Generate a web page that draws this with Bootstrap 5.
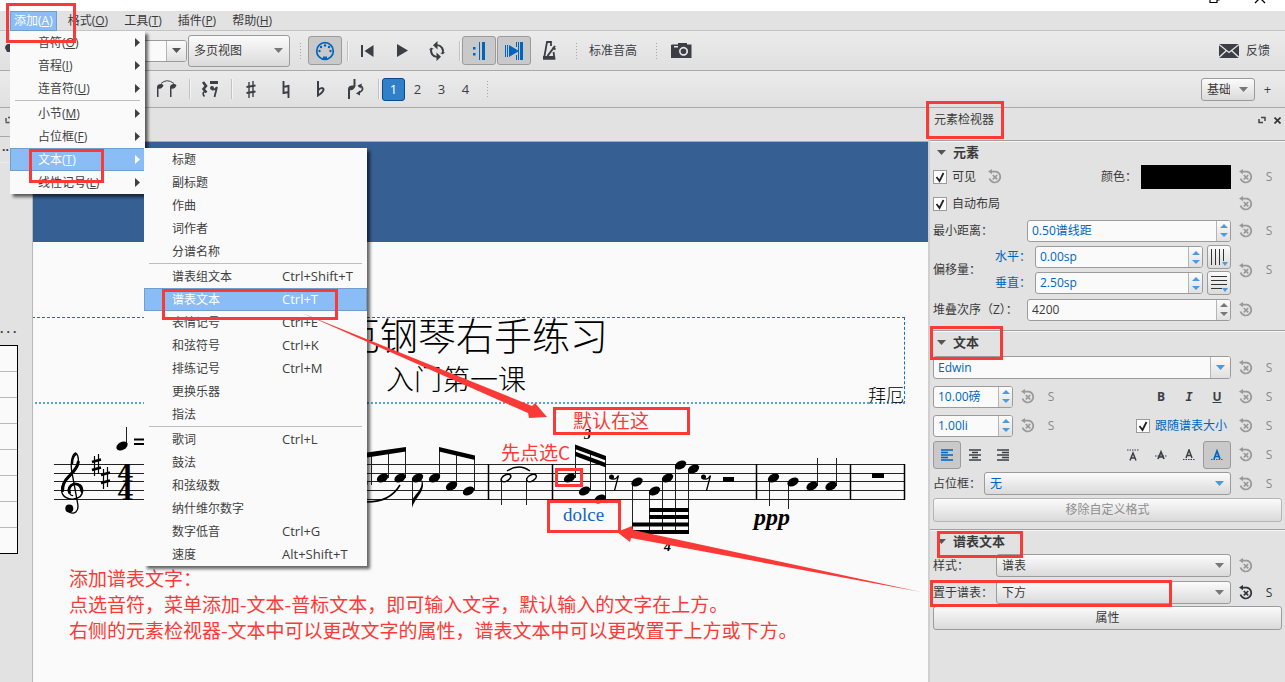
<!DOCTYPE html>
<html lang="zh-CN">
<head>
<meta charset="utf-8">
<meta name="viewport" content="width=device-width, initial-scale=1">
<title>MuseScore</title>
<link href="https://cdn.jsdelivr.net/npm/bootstrap@5.3.0/dist/css/bootstrap.min.css" rel="stylesheet">
<style>
:root{--ink:#3b3f45;--blue:#0065bf;--edge:#9b9b9b;--chrome:#e2e2e2;--paper:#fafafa;--mark:#fb3a37}
body{font:12px/18px "Open Sans","Noto Sans CJK SC",sans-serif;color:#3a3a3a;background:var(--chrome);min-height:100vh;overflow:hidden}
button,input,select{font:inherit;color:inherit}
svg{display:block;flex:none}
.titlebar{height:11px;background:#fff}
.menubar{height:20px;border-bottom:1px solid #c4c4c4;padding-left:10px}
.menubar button{border:0;background:none;padding:0 4px;height:20px;line-height:18px;margin-right:8px}
.menubar .opened{background:#8abcf5;border:1px solid #6f9fcd;color:#fff;padding:0 3px;margin-right:7px}
.toolrow{background:linear-gradient(#ebebeb,#e0e0e0);border-bottom:1px solid #a9a9a9;gap:1px}
.tr-a{height:40px;padding-left:4px}
.tr-b{height:37px;padding:0 2px 0 150px}
.tool{width:34px;height:29px;border:1px solid transparent;background:none;border-radius:3px;padding:0;display:flex;align-items:center;justify-content:center;color:var(--ink);flex:none}
.tool.active{background:#c9c9c9;border-color:var(--edge);color:var(--blue)}
.tool.feedback{width:auto;padding-right:14px;gap:7px}
.voice{width:23px;height:23px;font-size:13px}
.voice.active{background:#2f80c8;border-color:#0c4a86;color:#fff}
.tsep{width:2px;height:20px;border-left:1px solid #c2c2c2;border-right:1px solid #f4f4f4;flex:none}
.grip{width:4px;height:18px;flex:none;background:radial-gradient(circle,#a8a8a8 30%,transparent 45%) 0 0/3px 3px}
.combo{appearance:none;height:23px;border:1px solid var(--edge);border-radius:3px;padding:0 24px 0 5px;line-height:19px;min-width:0;
 background:url("data:image/svg+xml,%3Csvg xmlns='http://www.w3.org/2000/svg' width='9' height='5'%3E%3Cpath d='M0 0h9L4.500 5z' fill='%23777'/%3E%3C/svg%3E") no-repeat right 6px center,linear-gradient(#fbfbfb,#dadada)}
.combo.blue{color:var(--blue);background-image:url("data:image/svg+xml,%3Csvg xmlns='http://www.w3.org/2000/svg' width='9' height='5'%3E%3Cpath d='M0 0h9L4.500 5z' fill='%234a9be0'/%3E%3C/svg%3E"),linear-gradient(#fbfbfb,#dadada)}
.combo.tall{height:32px;width:102px}
.zoombox{width:84px;height:32px;border-radius:3px}
.pushbtn{height:24px;border:1px solid var(--edge);border-radius:3px;background:linear-gradient(#fbfbfb,#dadada);padding:0;line-height:20px}
.pushbtn:disabled{color:#8e8e8e;border-color:#b5b5b5}
.spin{height:22px;border:1px solid var(--edge);border-radius:3px;background:var(--paper);overflow:hidden;color:var(--blue);min-width:0}
.spin.plain{color:#3a3a3a}
.spin input{border:0;background:none;min-width:0;width:10px;padding:0 4px;outline:0}
.spin button{border:0;border-left:1px solid #b5b5b5;background:linear-gradient(#fbfbfb,#e0e0e0);padding:0;width:14px;display:flex;align-items:center;justify-content:center;color:#4a9be0;flex:none}
.spin.plain button{color:#777}
.w-num{width:80px}
.dock{width:33px;border-right:1px solid #b9b9b9;overflow:hidden}
.dockhead{height:34px;border-bottom:1px solid #a9a9a9}
.palette{width:18px;height:209px;border:1px solid #000;border-left:0;background:repeating-linear-gradient(var(--paper) 0 25px,#b9b9b9 25px 26px)}
.backdrop-blue{height:100px;background:#365f94}
.page{background:var(--paper);padding-top:75px}
.frame{margin:0 23px 0 -26px;height:87px;border:1px dashed #1670c4;border-bottom:2px dotted #5aa0dc;color:#000}
.songtitle{font-size:38px;line-height:34px;font-weight:300}
.songsub{font-size:28px;line-height:34px;margin-top:10px;font-weight:300}
.composer{right:0;bottom:-2px;font-size:18px;line-height:18px;font-weight:300}
.notes-red{color:var(--mark);font-size:19px;line-height:26px;padding-left:36px;font-family:"Noto Sans CJK SC",sans-serif}
.inspector{width:357px;border-left:2px solid #cfcfcf}
.panel{padding:0 3px 7px 3px}
.sect{border-top:1px solid #a0a0a0;box-shadow:inset 0 1px #f6f6f6}
.secthead{height:22px;border:0;background:none;padding:0 0 0 4px;font-weight:700;gap:7px;font-size:13px}
.r27{height:27px}.r26{height:26px}.r29{height:29px}
.resetbtn{width:30px;border:0;background:none;padding:0;display:flex;justify-content:center;color:#999;flex:none}
.sbtn{width:16px;margin-right:5px;border:0;background:none;padding:0;color:#8a8a8a;flex:none}
.strong{color:#2f3338}
.tick{appearance:none;width:14px;height:14px;margin:0 5px 0 0;border:1px solid var(--edge);background:#fff url("data:image/svg+xml,%3Csvg xmlns='http://www.w3.org/2000/svg' width='12' height='12'%3E%3Cpath d='M2.500 6l3 4L9.500 2' fill='none' stroke='%23222' stroke-width='1.800'/%3E%3C/svg%3E") center no-repeat}
.fmt{width:28px;height:28px}
.swatch{width:90px;height:24px;background:#000;border:0}
.bluetext{color:var(--blue)}
.flyout{position:absolute;background:var(--paper);box-shadow:3px 3px 3px rgba(0,0,0,.6);z-index:5}
.fly-a{left:10px;top:31px;width:135px}
.fly-b{left:144px;top:148px;width:223px}
.entry{height:23px;width:100%;border:1px solid transparent;background:none;padding:0 4px 0 27px;display:flex;align-items:center;text-align:left;line-height:19px;color:#404040}
.entry kbd{all:unset;width:80px;font-size:13px;white-space:nowrap}
.entry.chosen{background:#8abcf5;border-color:#6f9fcd;color:#fff}
.divide{height:2px;margin:0 5px;border-top:1px solid #bdbdbd}
.overlay{position:absolute;left:0;top:0;z-index:9;pointer-events:none;overflow:visible}
.ring rect{fill:none;stroke:var(--mark);stroke-width:3}
</style>
</head>
<body class="position-relative d-flex flex-column">

<svg width="0" height="0" class="position-absolute" aria-hidden="true">
 <symbol id="i-reset" viewBox="0 0 14 15"><path d="M3 2.600H8a5.500 5.500 0 1 1-6.500 7" fill="none" stroke="currentColor" stroke-width="1.700"/><path d="M0 2.600L4 0v5.200z" fill="currentColor"/><path d="M4.800 6l4.400 4.400M9.200 6l-4.400 4.400" stroke="currentColor" stroke-width="1.700"/></symbol>
 <symbol id="i-spin" viewBox="0 0 8 15"><path d="M0 5L4 1l4 4zM0 10l4 4 4-4z" fill="currentColor"/></symbol>
 <symbol id="i-right" viewBox="0 0 5 9"><path d="M0 0l5 4.500L0 9z" fill="currentColor"/></symbol>
 <symbol id="i-down" viewBox="0 0 9 5"><path d="M0 0h9L4.500 5z" fill="#555"/></symbol>
 <symbol id="head" viewBox="-7 -6 14 12" overflow="visible"><ellipse rx="6" ry="4" transform="rotate(-27)"/></symbol>
 <symbol id="rest8" viewBox="0 0 11 18" overflow="visible"><circle cx="2.500" cy="3" r="2.500"/><path d="M2 4.500C6 6.500 8 4 9.500 1.500L5.500 16.500" fill="none" stroke="#000" stroke-width="1.300"/></symbol>
 <symbol id="sharp" viewBox="0 0 9 22" overflow="visible"><path d="M2.500 2v20M6.500 0v20" stroke="#000" stroke-width="1.200"/><path d="M0 8l9-2.500M0 16l9-2.500" stroke="#000" stroke-width="2.800"/></symbol>
</svg>

<div class="titlebar d-flex justify-content-end">
 <svg width="85" height="11"><path d="M10 -4V2.500H17V-4M12.500 -2H19V0H17" fill="none" stroke="#000" stroke-width="1.200"/><path d="M55 3L60 -2L65 3" fill="none" stroke="#000" stroke-width="1.300"/></svg>
</div>

<nav class="menubar d-flex align-items-start">
 <button class="opened">添加(<u>A</u>)</button><button>格式(<u>O</u>)</button><button>工具(<u>T</u>)</button><button>插件(<u>P</u>)</button><button>帮助(<u>H</u>)</button>
</nav>

<div class="toolrow tr-a d-flex align-items-center">
 <svg width="20" height="14"><path d="M1 4a5 4 0 0 1 12 0v6H6V8H3z" fill="#3b3f45"/></svg>
 <div style="width:77px"></div>
 <div class="spin plain zoombox d-flex"><input class="flex-fill" aria-label="缩放"><button style="width:20px" aria-label="选择缩放"><svg width="9" height="5"><use href="#i-down"/></svg></button></div>
 <select class="combo tall" aria-label="视图"><option>多页视图</option></select>
 <div class="grip ms-2 me-1"></div>
 <button class="tool active" aria-label="MIDI"><svg width="20" height="20" viewBox="0 0 20 20"><circle cx="10" cy="10" r="8.300" fill="none" stroke="currentColor" stroke-width="1.700"/><g fill="currentColor"><circle cx="4.500" cy="10" r="1.200"/><circle cx="6" cy="6" r="1.200"/><circle cx="10" cy="4.500" r="1.200"/><circle cx="14" cy="6" r="1.200"/><circle cx="15.500" cy="10" r="1.200"/><path d="M8 19v-3.500h4V19z"/></g></svg></button>
 <div class="tsep ms-1"></div>
 <button class="tool" aria-label="回到开头"><svg width="13" height="12"><path d="M0 0h2v12H0zM12.500 0v12L3.500 6z" fill="currentColor"/></svg></button>
 <button class="tool" aria-label="播放"><svg width="11" height="13"><path d="M0 0l11 6.500L0 13z" fill="currentColor"/></svg></button>
 <button class="tool" aria-label="循环"><svg width="18" height="20" viewBox="0 0 18 20"><path d="M8 4.200A6 6 0 0 1 14.200 13M10 15.800A6 6 0 0 1 3.800 7" fill="none" stroke="currentColor" stroke-width="1.900"/><path d="M9.500 0v8.400L5 4.200zM8.500 11.600V20l4.500-4.200zM11.500 12.500h4.500l1-1.500M6.500 7.500H2L1 9" fill="currentColor"/></svg></button>
 <div class="tsep ms-1"></div>
 <button class="tool active" aria-label="播放反复"><svg width="13" height="18"><path d="M6 0h1v18H6zM9 0h3v18H9z" fill="currentColor"/><path d="M0 5h2.500v2.500H0zM0 11h2.500v2.500H0z" fill="currentColor"/></svg></button>
 <button class="tool active" aria-label="跟随播放"><svg width="18" height="18"><path d="M0 3h1v12H0zM2 3h1v12H2zM4 3l10 6-10 6zM11 0h1v5h-1zM13 0h1v18h-1zM15 0h3v18h-3zM11 13h1v5h-1z" fill="currentColor"/></svg></button>
 <button class="tool" aria-label="节拍器"><svg width="15" height="19" viewBox="0 0 15 19"><path d="M9 5V1H5L2 17.500h10.500L11.500 11" fill="none" stroke="currentColor" stroke-width="1.800"/><path d="M1 15h12v3.500H1z" fill="currentColor"/><path d="M5.500 15L13 5M10.500 6.500l3 2" stroke="currentColor" stroke-width="2"/></svg></button>
 <div class="grip ms-2"></div>
 <button class="tool w-auto ms-1 ps-1">标准音高</button>
 <div class="grip ms-3"></div>
 <button class="tool ms-1" aria-label="截图"><svg width="21" height="15" viewBox="0 0 21 15"><path fill-rule="evenodd" d="M1 1.500H7V0h9v1.500h4.500V15H0V2zM12.500 3.800a4.500 4.500 0 1 0 .1 0zM3 3v1.500h4V3z" fill="currentColor"/><circle cx="12.500" cy="8.300" r="2.800" fill="currentColor"/></svg></button>
 <button class="tool feedback ms-auto"><svg width="20" height="14" viewBox="0 0 20 14"><path d="M0 0h20v14H0z" fill="#3b3f45"/><path d="M0 .500L10 8.500 20 .500M0 13.500l7.500-7M20 13.500l-7.500-7" fill="none" stroke="#e6e6e6" stroke-width="1.300"/></svg>反馈</button>
</div>

<div class="toolrow tr-b d-flex align-items-center">
 <button class="tool" aria-label="连音线"><svg width="22" height="18" viewBox="0 0 22 18"><path d="M5 3.500Q11-2 18 3.500" fill="none" stroke="#3b3f45"/><path d="M1 17V7C1 4 6 3 7.500 5.500 6 9 4 9 2.500 8.500V17zM14 17V7c0-3 5-4 6.500-1.500C19 9 17 9 15.500 8.500V17z" fill="currentColor"/></svg></button>
 <div class="tsep ms-1"></div>
 <button class="tool" aria-label="休止符"><svg width="17" height="17" viewBox="0 0 17 17"><path d="M2 1l3 4-2.500 3L5.500 11.500" fill="none" stroke="currentColor" stroke-width="2.600"/><path d="M5 11c-3-1-4 1.500-1.500 4.500" fill="none" stroke="currentColor" stroke-width="1.600"/><path d="M9 0h8v3H9z" fill="currentColor"/><circle cx="11" cy="7" r="2" fill="currentColor"/><path d="M11 8.500c3 .500 4-1 5-2.500L13.500 16" fill="none" stroke="currentColor" stroke-width="1.800"/></svg></button>
 <div class="tsep ms-1"></div>
 <button class="tool" aria-label="升号"><svg width="10" height="17" viewBox="0 0 9 17"><path d="M2.500 1v16M6.500 0v16" stroke="currentColor" stroke-width="1.400"/><path d="M0 6l9-1.500M0 12l9-1.500" stroke="currentColor" stroke-width="2.200"/></svg></button>
 <button class="tool" aria-label="还原号"><svg width="8" height="17" viewBox="0 0 8 17"><path d="M1.500 0v12L7 11M1 6l5.500-1V17" fill="none" stroke="currentColor" stroke-width="1.900"/></svg></button>
 <button class="tool" aria-label="降号"><svg width="8" height="16" viewBox="0 0 8 16"><path d="M1 0v14.500C5 12 6.500 10 6.500 8.500 6.500 6.500 3 6.500 1 9.500" fill="none" stroke="currentColor" stroke-width="2"/></svg></button>
 <button class="tool" aria-label="翻转"><svg width="16" height="20" viewBox="0 0 16 20"><path d="M0 20V10c0-3 3-4 5.500-3.500V0h2v7C6.500 10 4 12 2 11v9z" fill="currentColor"/><path d="M10.500 7c4-1 5 3 3 5-1 1-2 1.500-3 2" fill="none" stroke="currentColor" stroke-width="1.700"/><path d="M8 14.500l4-3v5zM14 4.500l-4.500 2 3 3z" fill="currentColor"/></svg></button>
 <div class="tsep ms-1"></div><div></div>
 <button class="tool voice active">1</button><button class="tool voice">2</button><button class="tool voice">3</button><button class="tool voice">4</button>
 <div class="grip ms-2"></div>
 <select class="combo ms-auto" aria-label="工作区" style="width:54px"><option>基础</option></select>
 <button class="tool voice me-1">+</button>
</div>

<main class="d-flex flex-fill">
 <div class="dock flex-shrink-0">
  <div class="dockhead" style="height:29px"><svg width="12" height="16"><path d="M6 13.500V10M8 9.500h2M5.500 14.500h4" fill="none" stroke="#555" stroke-width="1.500"/></svg></div>
  <div class="fw-bold border-bottom border-secondary-subtle" style="height:26px;padding:4px 2px">··</div>
  <div style="height:157px"></div>
  <div class="fw-bold" style="height:25px">. . .</div>
  <div class="palette"></div>
 </div>

 <section class="flex-fill overflow-hidden d-flex flex-column" style="min-width:0">
  <div class="dockhead flex-shrink-0"></div>
  <div class="backdrop-blue flex-shrink-0"></div>
  <div class="page flex-fill">
   <div class="frame position-relative text-center">
    <div class="songtitle">拜厄钢琴右手练习</div>
    <div class="songsub">入门第一课</div>
    <div class="composer position-absolute">拜厄</div>
   </div>
   <svg width="874" height="161" viewBox="33 404 874 161" overflow="visible">
    <path d="M54 464.500H905M54 473.500H905M54 481.500H905M54 490.500H905M54 499.500H905" stroke="#222" fill="none"/>
    <path d="M488.500 464v36M552.500 464v36M756.500 464v36M850.500 464v36M904.500 464v36" stroke="#000" stroke-width="1.500"/>
    <!-- treble clef -->
    <g transform="translate(40 440) scale(.333)" fill="none" stroke="#000" stroke-linecap="round">
     <circle cx="88" cy="206" r="12" fill="#000" stroke="none"/>
     <path stroke-width="4" d="M88 217C102 224 118 216 113 190L95 92C91 62 98 42 107 39C121 50 116 80 100 98C80 118 64 130 65 152C66 172 88 180 102 177C122 174 129 164 128 148C126 134 114 130 103 131C88 134 80 150 88 160C91 165 95 167 98 167"/>
     <path stroke-width="9" d="M115 66C113 84 96 100 86 110C72 124 67 136 68 152"/>
     <path stroke-width="8" d="M126 155C124 135 112 131 102 132C90 135 84 148 89 158"/>
     <path stroke-width="6" d="M97 70C97 55 102 47 107 43"/>
    </g>
    <use href="#sharp" x="92" y="454" width="9" height="22"/><use href="#sharp" x="101" y="467" width="9" height="22"/>
    <g font-family="DejaVu Serif,serif" font-weight="700" font-size="24"><text x="117" y="482">4</text><text x="117" y="500">4</text></g>
    <path d="M126.500 427v19M371.500 454v31M388.500 452v26M405.500 449v29M439.500 450v28M456.500 453v33M474.500 457v34M412.500 478v26M501.500 478v27M526.500 478v27M575.500 446v32M590.500 453v38M605.500 459v40M632.500 482v52M649.500 491v43M662.500 478v56M675.500 465v69M688.500 469v65M769.500 478v28M788.500 482v27M817.500 458v28M836.500 458v28" stroke="#222" stroke-width="1"/>
    <g>
     <use href="#head" x="115" y="440" width="14" height="12"/>
     <use href="#head" x="355" y="479" width="14" height="12"/><use href="#head" x="375.500" y="472" width="14" height="12"/><use href="#head" x="393" y="472" width="14" height="12"/><use href="#head" x="410.500" y="472" width="14" height="12"/><use href="#head" x="427.500" y="472" width="14" height="12"/><use href="#head" x="444.500" y="480" width="14" height="12"/><use href="#head" x="461.500" y="485" width="14" height="12"/>
     <use href="#head" x="562.500" y="472" width="14" height="12"/><use href="#head" x="577.500" y="485" width="14" height="12"/><use href="#head" x="593" y="493" width="14" height="12"/>
     <use href="#head" x="630" y="476" width="14" height="12"/><use href="#head" x="647.500" y="485" width="14" height="12"/><use href="#head" x="660.500" y="472" width="14" height="12"/><use href="#head" x="673.500" y="459" width="14" height="12"/><use href="#head" x="686.500" y="463" width="14" height="12"/>
     <use href="#head" x="766.500" y="472" width="14" height="12"/><use href="#head" x="786" y="476" width="14" height="12"/><use href="#head" x="805" y="480" width="14" height="12"/><use href="#head" x="824" y="480" width="14" height="12"/>
    </g>
    <g fill="none" stroke="#000" stroke-width="1.600"><ellipse cx="506" cy="478" rx="5.300" ry="3" transform="rotate(-30 506 478)"/><ellipse cx="531.500" cy="478" rx="5.300" ry="3" transform="rotate(-30 531.500 478)"/></g>
    <path d="M367 452.500L406 447V451.500L367 457.500zM439 447L475 455.500V460L439 451.500zM575 444.500L606 456V460.500L575 449zM575 451.500L606 463V467.500L575 456zM649 508h40v4h-40zM649 515h40v4h-40zM632 522.500h57v4h-57zM632 530h57v4h-57z"/>
    <path d="M412 500C417 492 424 488 421 478C428 490 415 497 412 508z"/>
    <path d="M367 502Q390 502 400 485M507 471Q519 463 530 471" fill="none" stroke="#000" stroke-width="1.500"/>
    <use href="#rest8" x="609" y="474" width="11" height="18"/><use href="#rest8" x="701" y="474" width="11" height="18"/>
    <path d="M723 477h11v5h-11zM872 473h12v5h-12zM134 438.500h10v2h-10zM134 443h10v2h-10z"/>
    <g font-family="Liberation Serif,serif" font-weight="700" font-style="italic"><text x="584" y="439" font-size="14">3</text><text x="664" y="551" font-size="14">4</text><text x="754" y="525" font-size="24">ppp</text></g>
    <text x="563" y="521" font-family="Liberation Serif,serif" font-size="19" fill="#1763c0">dolce</text>
   </svg>
   <div class="notes-red text-nowrap">添加谱表文字：<br>点选音符，菜单添加-文本-普标文本，即可输入文字，默认输入的文字在上方。<br>右侧的元素检视器-文本中可以更改文字的属性，谱表文本中可以更改置于上方或下方。</div>
  </div>
 </section>

 <aside class="inspector flex-shrink-0 position-relative">
  <div class="d-flex align-items-center ps-1 pe-1" style="height:32px"><span class="pb-2">元素检视器</span>
   <button class="border-0 bg-transparent p-0 ms-auto me-2 pb-2" aria-label="浮动"><svg width="8" height="8"><path d="M3 1.500h4V5M5 6.500H1V3" fill="none" stroke="#444" stroke-width="1.500"/></svg></button>
   <button class="border-0 bg-transparent p-0 pb-2" aria-label="关闭"><svg width="7" height="7"><path d="M.500.500l6 6M6.500.500l-6 6" stroke="#333" stroke-width="1.600"/></svg></button>
  </div>
  <div class="sect panel">
   <button class="secthead d-flex align-items-center"><svg width="9" height="5"><use href="#i-down"/></svg>元素</button>
   <div class="r27 d-flex align-items-center"><input type="checkbox" class="tick" id="vis" checked><label for="vis">可见</label><button class="resetbtn ms-1" aria-label="重置"><svg width="14" height="15"><use href="#i-reset"/></svg></button><span class="ms-auto me-1">颜色：</span><button class="swatch" aria-label="颜色"></button><button class="resetbtn" aria-label="重置"><svg width="14" height="15"><use href="#i-reset"/></svg></button><button class="sbtn">S</button></div>
   <div class="r27 d-flex align-items-center"><input type="checkbox" class="tick" id="auto" checked><label for="auto" class="me-auto">自动布局</label><button class="resetbtn" aria-label="重置"><svg width="14" height="15"><use href="#i-reset"/></svg></button><span class="sbtn"></span></div>
   <div class="r27 d-flex align-items-center"><label for="mind" style="width:94px">最小距离：</label><div class="spin d-flex flex-fill"><input id="mind" class="flex-fill" value="0.50谱线距"><button aria-label="增减"><svg width="8" height="15"><use href="#i-spin"/></svg></button></div><button class="resetbtn" aria-label="重置"><svg width="14" height="15"><use href="#i-reset"/></svg></button><button class="sbtn">S</button></div>
   <div class="d-flex align-items-center"><span style="width:62px">偏移量：</span>
    <div class="flex-fill">
     <div class="r26 d-flex align-items-center"><label for="hx" class="bluetext" style="width:40px">水平：</label><div class="spin d-flex flex-fill"><input id="hx" class="flex-fill" value="0.00sp"><button aria-label="增减"><svg width="8" height="15"><use href="#i-spin"/></svg></button></div><button class="pushbtn ms-1" style="width:24px" aria-label="水平网格"><svg width="20" height="20"><path d="M3.500 2v16M7.500 2v16M11.500 2v16M15.500 2v12" stroke="#333"/><path d="M14 15h6l-3 4z" fill="#4a9be0"/></svg></button></div>
     <div class="r26 d-flex align-items-center"><label for="vy" class="bluetext" style="width:40px">垂直：</label><div class="spin d-flex flex-fill"><input id="vy" class="flex-fill" value="2.50sp"><button aria-label="增减"><svg width="8" height="15"><use href="#i-spin"/></svg></button></div><button class="pushbtn ms-1" style="width:24px" aria-label="垂直网格"><svg width="20" height="20"><path d="M3 3.500h16M3 7.500h16M3 11.500h16M3 15.500h11" stroke="#333"/><path d="M14 15h6l-3 4z" fill="#4a9be0"/></svg></button></div>
    </div><button class="resetbtn" aria-label="重置"><svg width="14" height="15"><use href="#i-reset"/></svg></button><button class="sbtn">S</button></div>
   <div class="r27 d-flex align-items-center"><label for="zz" style="width:94px">堆叠次序（Z）：</label><div class="spin plain d-flex flex-fill"><input id="zz" class="flex-fill" value="4200"><button aria-label="增减"><svg width="8" height="15"><use href="#i-spin"/></svg></button></div><button class="resetbtn" aria-label="重置"><svg width="14" height="15"><use href="#i-reset"/></svg></button><span class="sbtn"></span></div>
  </div>
  <div class="sect panel">
   <button class="secthead d-flex align-items-center"><svg width="9" height="5"><use href="#i-down"/></svg>文本</button>
   <div class="r29 d-flex align-items-center"><div class="spin d-flex flex-fill" style="height:23px"><input class="flex-fill" aria-label="字体" value="Edwin"><button style="width:20px" aria-label="选择字体"><svg width="9" height="5"><path d="M0 0h9L4.500 5z" fill="currentColor"/></svg></button></div><button class="resetbtn" aria-label="重置"><svg width="14" height="15"><use href="#i-reset"/></svg></button><button class="sbtn">S</button></div>
   <div class="r29 d-flex align-items-center"><div class="spin w-num d-flex"><input class="flex-fill" aria-label="字号" value="10.00磅"><button aria-label="增减"><svg width="8" height="15"><use href="#i-spin"/></svg></button></div><button class="resetbtn" aria-label="重置"><svg width="14" height="15"><use href="#i-reset"/></svg></button><button class="sbtn me-auto">S</button><button class="tool fmt fw-bold">B</button><button class="tool fmt fw-bold" style="font-family:'DejaVu Sans Mono',monospace"><i>I</i></button><button class="tool fmt fw-bold"><u>U</u></button><button class="resetbtn" aria-label="重置"><svg width="14" height="15"><use href="#i-reset"/></svg></button><button class="sbtn">S</button></div>
   <div class="r29 d-flex align-items-center"><div class="spin w-num d-flex"><input class="flex-fill" aria-label="行距" value="1.00li"><button aria-label="增减"><svg width="8" height="15"><use href="#i-spin"/></svg></button></div><button class="resetbtn" aria-label="重置"><svg width="14" height="15"><use href="#i-reset"/></svg></button><button class="sbtn me-auto">S</button><input type="checkbox" class="tick" id="fol" checked><label for="fol" class="bluetext me-1">跟随谱表大小</label><button class="resetbtn" aria-label="重置"><svg width="14" height="15"><use href="#i-reset"/></svg></button><button class="sbtn">S</button></div>
   <div class="r29 d-flex align-items-center">
    <button class="tool fmt active" aria-label="左对齐"><svg width="12" height="12"><path d="M0 1h12M0 3.500h7M0 6h12M0 8.500h7M0 11h12" stroke="currentColor" stroke-width="1.300"/></svg></button>
    <button class="tool fmt" aria-label="居中"><svg width="12" height="12"><path d="M0 1h12M3 3.500h6M0 6h12M3 8.500h6M0 11h12" stroke="currentColor" stroke-width="1.300"/></svg></button>
    <button class="tool fmt me-auto" aria-label="右对齐"><svg width="12" height="12"><path d="M0 1h12M5 3.500h7M0 6h12M5 8.500h7M0 11h12" stroke="currentColor" stroke-width="1.300"/></svg></button>
    <button class="tool fmt" aria-label="顶端"><svg width="12" height="12"><path d="M0 1h12" stroke="currentColor" stroke-dasharray="1.500 1"/><path d="M3 11.500L6 4l3 7.500M4 9h4" fill="none" stroke="currentColor" stroke-width="1.500"/></svg></button>
    <button class="tool fmt" aria-label="中部"><svg width="12" height="12"><path d="M0 7h12" stroke="currentColor" stroke-dasharray="1.500 1"/><path d="M3 10L6 3l3 7M4 8h4" fill="none" stroke="currentColor" stroke-width="1.700"/></svg></button>
    <button class="tool fmt" aria-label="基线"><svg width="12" height="12"><path d="M0 10.500h12" stroke="currentColor" stroke-dasharray="1.500 1"/><path d="M3 9L6 1l3 8M4 6.500h4" fill="none" stroke="currentColor" stroke-width="1.500"/></svg></button>
    <button class="tool fmt active" aria-label="底端"><svg width="12" height="12"><path d="M0 10.500h12" stroke="currentColor" stroke-dasharray="1.500 1"/><path d="M3 10L6 2l3 8M4 7.500h4" fill="none" stroke="currentColor" stroke-width="1.700"/></svg></button>
    <button class="resetbtn" aria-label="重置"><svg width="14" height="15"><use href="#i-reset"/></svg></button><button class="sbtn">S</button></div>
   <div class="r29 d-flex align-items-center"><label for="fr" style="width:51px">占位框：</label><select id="fr" class="combo blue flex-fill"><option>无</option></select><button class="resetbtn" aria-label="重置"><svg width="14" height="15"><use href="#i-reset"/></svg></button><button class="sbtn">S</button></div>
   <button class="pushbtn w-100 d-block" disabled>移除自定义格式</button>
  </div>
  <div class="sect panel">
   <button class="secthead d-flex align-items-center"><svg width="9" height="5"><use href="#i-down"/></svg>谱表文本</button>
   <div class="r27 d-flex align-items-center"><label for="st" style="width:63px">样式：</label><select id="st" class="combo flex-fill"><option>谱表</option></select><button class="resetbtn" aria-label="重置"><svg width="14" height="15"><use href="#i-reset"/></svg></button><span class="sbtn"></span></div>
   <div class="r27 d-flex align-items-center"><label for="pl" style="width:63px">置于谱表：</label><select id="pl" class="combo flex-fill"><option>下方</option></select><button class="resetbtn strong" aria-label="重置"><svg width="14" height="15"><use href="#i-reset"/></svg></button><button class="sbtn strong">S</button></div>
   <button class="pushbtn w-100 d-block">属性</button>
  </div>
  <!-- callout rings drawn over the inspector -->
  <svg class="overlay ring" width="355" height="574" viewBox="930 108 355 574"><rect x="927.500" y="102.500" width="75" height="35"/><rect x="931.500" y="327.500" width="70" height="31"/><rect x="938.500" y="532.500" width="83" height="24"/><rect x="931.500" y="581.500" width="239" height="24"/></svg>
 </aside>
</main>

<div class="flyout fly-a">
 <button class="entry"><span class="flex-fill">音符(<u>O</u>)</span><svg width="5" height="9"><use href="#i-right"/></svg></button>
 <button class="entry"><span class="flex-fill">音程(<u>I</u>)</span><svg width="5" height="9"><use href="#i-right"/></svg></button>
 <button class="entry"><span class="flex-fill">连音符(<u>U</u>)</span><svg width="5" height="9"><use href="#i-right"/></svg></button>
 <div class="divide"></div>
 <button class="entry"><span class="flex-fill">小节(<u>M</u>)</span><svg width="5" height="9"><use href="#i-right"/></svg></button>
 <button class="entry"><span class="flex-fill">占位框(<u>F</u>)</span><svg width="5" height="9"><use href="#i-right"/></svg></button>
 <button class="entry chosen"><span class="flex-fill">文本(<u>T</u>)</span><svg width="5" height="9"><use href="#i-right"/></svg></button>
 <button class="entry"><span class="flex-fill">线性记号(<u>L</u>)</span><svg width="5" height="9"><use href="#i-right"/></svg></button>
</div>

<div class="flyout fly-b">
 <button class="entry">标题</button><button class="entry">副标题</button><button class="entry">作曲</button><button class="entry">词作者</button><button class="entry">分谱名称</button>
 <div class="divide"></div>
 <button class="entry"><span class="flex-fill">谱表组文本</span><kbd>Ctrl+Shift+T</kbd></button>
 <button class="entry chosen"><span class="flex-fill">谱表文本</span><kbd>Ctrl+T</kbd></button>
 <button class="entry"><span class="flex-fill">表情记号</span><kbd>Ctrl+E</kbd></button>
 <button class="entry"><span class="flex-fill">和弦符号</span><kbd>Ctrl+K</kbd></button>
 <button class="entry"><span class="flex-fill">排练记号</span><kbd>Ctrl+M</kbd></button>
 <button class="entry">更换乐器</button><button class="entry">指法</button>
 <div class="divide"></div>
 <button class="entry"><span class="flex-fill">歌词</span><kbd>Ctrl+L</kbd></button>
 <button class="entry">鼓法</button><button class="entry">和弦级数</button><button class="entry">纳什维尔数字</button>
 <button class="entry"><span class="flex-fill">数字低音</span><kbd>Ctrl+G</kbd></button>
 <button class="entry"><span class="flex-fill">速度</span><kbd>Alt+Shift+T</kbd></button>
</div>

<!-- tutorial callouts over the menus and the score -->
<svg class="overlay" width="925" height="600">
 <g class="ring"><rect x="7.500" y="4.500" width="67" height="37"/><rect x="30.500" y="150.500" width="72" height="31"/><rect x="163.500" y="290.500" width="173" height="28"/><rect x="554.500" y="408.500" width="134" height="25"/><rect x="556.500" y="469.500" width="25" height="16"/><rect x="548.500" y="501.500" width="71" height="30"/></g>
 <g fill="#fb3a37"><path d="M302 313L532 406L535 403L547 417L529 418L528 413z"/><path d="M921 592L633 530L632 526L617 532L630 542L631 538z"/></g>
 <g fill="#fb3a37" font-family="Noto Sans CJK SC,sans-serif" font-size="19"><text x="573" y="428">默认在这</text><text x="501" y="460">先点选C</text></g>
</svg>
<script src="https://cdn.jsdelivr.net/npm/bootstrap@5.3.0/dist/js/bootstrap.bundle.min.js"></script>
</body>
</html>
